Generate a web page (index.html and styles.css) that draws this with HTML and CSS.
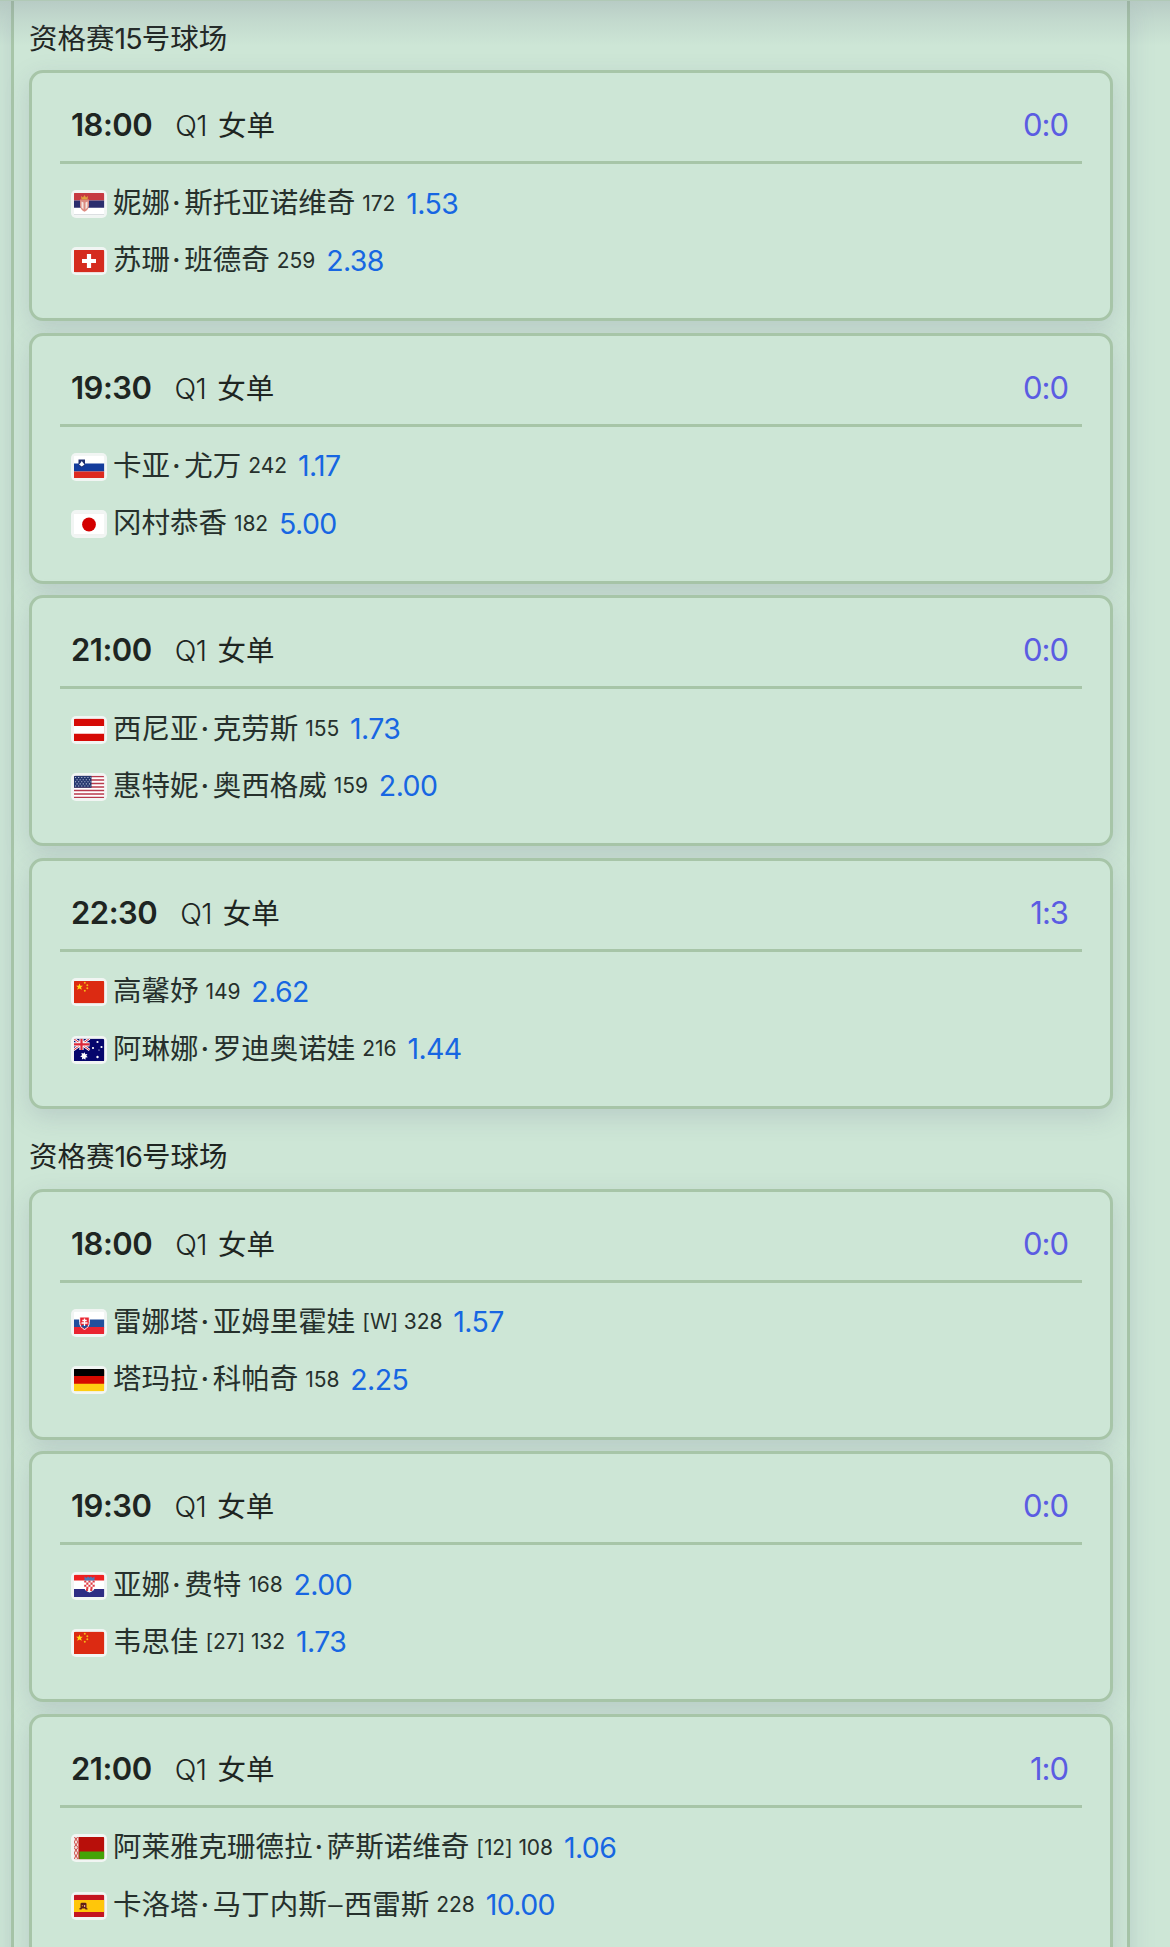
FILE: index.html
```html
<!DOCTYPE html>
<html lang="zh-CN">
<head>
<meta charset="utf-8">
<title>资格赛赛程</title>
<link rel="stylesheet" href="styles.css">
</head>
<body>
<svg class="defs" width="0" height="0" aria-hidden="true">
  <symbol id="rs" viewBox="0 0 31 23"><path fill="#fff" d="M0 0h31v23H0z"/><path fill="#c73a42" d="M0 0h31v8H0z"/><path fill="#2b2d6e" d="M0 8h31v7.300H0z"/><path fill="#dcdfe2" d="M0 21.500h31v1H0z"/><path fill="#dc8a80" d="M6.500 7h9v6c0 3-2 5-4.500 6.200C8.500 18 6.500 16 6.500 13z"/><path fill="#f3e4df" d="M8 9l2 1v7l-2-2zm6 0l-2 1v7l2-2z"/><path fill="#e0a040" d="M7.500 3.500l2 1.500L11 2.500 12.500 5l2-1.500L14 7H8z"/></symbol>
  <symbol id="ch" viewBox="0 0 31 23"><path fill="#d52b1e" d="M0 0h31v23H0z"/><path fill="#fff" d="M13.400 4.500h4.200v4.900h4.900v4.200h-4.900v4.900h-4.200v-4.900H8.500V9.400h4.900z"/></symbol>
  <symbol id="si" viewBox="0 0 31 23"><path fill="#fff" d="M0 0h31v23H0z"/><path fill="#143c9c" d="M0 8h31v8H0z"/><path fill="#dd2a20" d="M0 16h31v7H0z"/><path fill="#1f2f70" d="M5 4h6.500v4c0 2-1.500 3-3.250 4C6.500 11 5 10 5 8z"/><path fill="#fff" d="M5.500 9l1.500-1.500L8.250 5.500 9.700 7.500 11 9 8.250 11z"/></symbol>
  <symbol id="jp" viewBox="0 0 31 23"><path fill="#fff" d="M0 0h31v23H0z"/><path fill="#e3e5e4" d="M0 0h31v1H0zM0 22h31v1H0z"/><circle cx="15.500" cy="12" r="6.900" fill="#d30000"/></symbol>
  <symbol id="at" viewBox="0 0 31 23"><path fill="#d60a06" d="M0 0h31v23H0z"/><path fill="#fff" d="M0 7.500h31v7.800H0z"/></symbol>
  <symbol id="us" viewBox="0 0 31 23"><path fill="#fff" d="M0 0h31v23H0z"/><path stroke="#b83a4c" stroke-width="1.500" d="M0 1h31M0 4.500h31M0 8h31M0 11.500h31M0 15h31M0 18.500h31M0 22h31"/><path fill="#26386f" d="M0 0h18v12.300H0z"/><path stroke="#b7bfd6" stroke-width="1.100" stroke-dasharray="1.100 2" d="M1.500 2h16M3 4.200h14M1.500 6.300h16M3 8.400h14M1.500 10.500h16"/></symbol>
  <symbol id="cn" viewBox="0 0 31 23"><path fill="#dc2a12" d="M0 0h31v23H0z"/><path fill="#ffda16" d="M6 3l.9 2.200h2.500L7.500 6.800l.8 2.500L6 7.900 3.700 9.300l.8-2.500-1.900-1.600h2.500z"/><g fill="#f5b817"><circle cx="11.300" cy="2.300" r="1"/><circle cx="13.800" cy="4.700" r="1"/><circle cx="13.800" cy="7.800" r="1"/><circle cx="11.300" cy="10.200" r="1"/></g></symbol>
  <symbol id="au" viewBox="0 0 31 23"><path fill="#06066c" d="M0 0h31v23H0z"/><path stroke="#fff" stroke-width="2.600" d="M0 0l16 11.500M16 0L0 11.500"/><path stroke="#dc2638" stroke-width="1" d="M0 0l16 11.500M16 0L0 11.500"/><path stroke="#fff" stroke-width="4.200" d="M8 0v11.500M0 5.800h16"/><path stroke="#dc2638" stroke-width="2.200" d="M8 0v11.500M0 5.800h16"/><path fill="#fff" d="M11 13.700l.8 2 2.100-.3-1.100 1.800 1.500 1.500-2.200.4-.2 2.100-1.700-1.300-1.800 1 .3-2.100-2-.9 1.800-1.200-.6-2.100 2.200.5z"/><g fill="#fff"><circle cx="24" cy="3.500" r="1.100"/><circle cx="19.500" cy="9.500" r="1.100"/><circle cx="28" cy="8.500" r="1.100"/><circle cx="25.500" cy="11.500" r=".6"/><circle cx="24" cy="18.500" r="1.200"/></g></symbol>
  <symbol id="sk" viewBox="0 0 31 23"><path fill="#fff" d="M0 0h31v23H0z"/><path fill="#204f9c" d="M0 8h31v8H0z"/><path fill="#e92430" d="M0 15.500h31V23H0z"/><path fill="#e92430" stroke="#fff" d="M6.200 5.500h9.600v5.500c0 3.500-2 5.500-4.800 7-2.800-1.500-4.800-3.500-4.800-7z"/><path fill="#204f9c" d="M7.500 14.500q3.500-2.500 7 0L11 17.300z"/><path stroke="#fff" stroke-width="1.300" d="M11 7v7.500M8.800 9h4.400M8 11.500h6"/></symbol>
  <symbol id="de" viewBox="0 0 31 23"><path fill="#ffce12" d="M0 0h31v23H0z"/><path fill="#d60a00" d="M0 0h31v15.200H0z"/><path d="M0 0h31v7.500H0z"/></symbol>
  <symbol id="hr" viewBox="0 0 31 23"><path fill="#fff" d="M0 0h31v23H0z"/><path fill="#ee2020" d="M0 0h31v6H0z"/><path fill="#2e2c84" d="M0 14.500h31V23H0z"/><path fill="#fff" d="M10.500 6h11v6c0 3-2 5-5.500 6-3.500-1-5.500-3-5.500-6z"/><path stroke="#e03a44" stroke-width="2.100" stroke-dasharray="2.100 2.100" d="M10.700 7h10.500M12.800 9.100h8.500M10.700 11.200h10.500M12.800 13.300h7.500M12.500 15.400h7"/><path fill="#4e78b8" d="M11 2l2 1.500L14.500 2 16 3.200 17.500 2 19 3.500 21 2v4H11z"/></symbol>
  <symbol id="by" viewBox="0 0 31 23"><path fill="#b80f0a" d="M0 0h31v23H0z"/><path fill="#44a306" d="M6 15h25v8H6z"/><path fill="#f2dcd9" d="M0 0h5v23H0z"/><path fill="none" stroke="#c9403b" stroke-width=".9" d="M.5 0L4.500 5.500.5 11l4 5.500-4 6M4.500 0L.5 5.500l4 5.500-4 5.500 4 6"/></symbol>
  <symbol id="es" viewBox="0 0 31 23"><path fill="#c41420" d="M0 0h31v23H0z"/><path fill="#ffc60a" d="M0 5.500h31v12H0z"/><path fill="#5e2018" d="M7 9l1-.8h4l1 .8v4.500l1 .5v1h-2l-.5-1h-3l-.5 1H6v-1.500h1z"/><path fill="#c8832b" d="M8.300 10.500h1.400v1.300H8.300z"/><path fill="#e1a3a0" d="M10.500 10.500h1.200v2h-1.200z"/></symbol>
</svg>

<main class="schedule">
  <section class="court">
    <h2 class="court-name">资格赛<span class="num">15</span>号球场</h2>
    <article class="match">
      <header class="match-head"><time class="time">18:00</time><span class="round"><span class="num">Q1</span> 女单</span><span class="score">0:0</span></header>
      <div class="players">
        <div class="player"><svg class="flag"><use href="#rs"/></svg><span class="name">妮娜<i class="dot">·</i>斯托亚诺维奇</span><span class="rank">172</span><span class="odds">1.53</span></div>
        <div class="player"><svg class="flag"><use href="#ch"/></svg><span class="name">苏珊<i class="dot">·</i>班德奇</span><span class="rank">259</span><span class="odds">2.38</span></div>
      </div>
    </article>
    <article class="match">
      <header class="match-head"><time class="time">19:30</time><span class="round"><span class="num">Q1</span> 女单</span><span class="score">0:0</span></header>
      <div class="players">
        <div class="player"><svg class="flag"><use href="#si"/></svg><span class="name">卡亚<i class="dot">·</i>尤万</span><span class="rank">242</span><span class="odds">1.17</span></div>
        <div class="player"><svg class="flag"><use href="#jp"/></svg><span class="name">冈村恭香</span><span class="rank">182</span><span class="odds">5.00</span></div>
      </div>
    </article>
    <article class="match">
      <header class="match-head"><time class="time">21:00</time><span class="round"><span class="num">Q1</span> 女单</span><span class="score">0:0</span></header>
      <div class="players">
        <div class="player"><svg class="flag"><use href="#at"/></svg><span class="name">西尼亚<i class="dot">·</i>克劳斯</span><span class="rank">155</span><span class="odds">1.73</span></div>
        <div class="player"><svg class="flag"><use href="#us"/></svg><span class="name">惠特妮<i class="dot">·</i>奥西格威</span><span class="rank">159</span><span class="odds">2.00</span></div>
      </div>
    </article>
    <article class="match">
      <header class="match-head"><time class="time">22:30</time><span class="round"><span class="num">Q1</span> 女单</span><span class="score">1:3</span></header>
      <div class="players">
        <div class="player"><svg class="flag"><use href="#cn"/></svg><span class="name">高馨妤</span><span class="rank">149</span><span class="odds">2.62</span></div>
        <div class="player"><svg class="flag"><use href="#au"/></svg><span class="name">阿琳娜<i class="dot">·</i>罗迪奥诺娃</span><span class="rank">216</span><span class="odds">1.44</span></div>
      </div>
    </article>
  </section>

  <section class="court">
    <h2 class="court-name">资格赛<span class="num">16</span>号球场</h2>
    <article class="match">
      <header class="match-head"><time class="time">18:00</time><span class="round"><span class="num">Q1</span> 女单</span><span class="score">0:0</span></header>
      <div class="players">
        <div class="player"><svg class="flag"><use href="#sk"/></svg><span class="name">雷娜塔<i class="dot">·</i>亚姆里霍娃</span><span class="rank">[W] 328</span><span class="odds">1.57</span></div>
        <div class="player"><svg class="flag"><use href="#de"/></svg><span class="name">塔玛拉<i class="dot">·</i>科帕奇</span><span class="rank">158</span><span class="odds">2.25</span></div>
      </div>
    </article>
    <article class="match">
      <header class="match-head"><time class="time">19:30</time><span class="round"><span class="num">Q1</span> 女单</span><span class="score">0:0</span></header>
      <div class="players">
        <div class="player"><svg class="flag"><use href="#hr"/></svg><span class="name">亚娜<i class="dot">·</i>费特</span><span class="rank">168</span><span class="odds">2.00</span></div>
        <div class="player"><svg class="flag"><use href="#cn"/></svg><span class="name">韦思佳</span><span class="rank">[27] 132</span><span class="odds">1.73</span></div>
      </div>
    </article>
    <article class="match">
      <header class="match-head"><time class="time">21:00</time><span class="round"><span class="num">Q1</span> 女单</span><span class="score">1:0</span></header>
      <div class="players">
        <div class="player"><svg class="flag"><use href="#by"/></svg><span class="name">阿莱雅克珊德拉<i class="dot">·</i>萨斯诺维奇</span><span class="rank">[12] 108</span><span class="odds">1.06</span></div>
        <div class="player"><svg class="flag"><use href="#es"/></svg><span class="name">卡洛塔<i class="dot">·</i>马丁内斯<i class="dash">–</i>西雷斯</span><span class="rank">228</span><span class="odds">10.00</span></div>
      </div>
    </article>
  </section>
</main>
<div class="top-shade"></div>
</body>
</html>
```
FILE: styles.css
```css
* { box-sizing: border-box; }

html { height: 1947px; overflow: hidden; }

body {
  margin: 0;
  height: 1947px;
  overflow: hidden;
  background: #cde6d6;
  color: #1e2522;
  font-family: Inter, "Noto Sans CJK SC", sans-serif;
  font-size: 28.5px;
}

.defs { position: absolute; }

.schedule {
  width: 1119px;
  height: 2100px;
  margin-left: 11px;
  padding: 0 14px 0 15px;
  border: 3px solid #a7c5a8;
  border-top: 0;
  box-shadow: 0 8px 24px rgba(120, 125, 160, .2);
}

.court-name {
  height: 70px;
  margin: 0;
  padding-top: 16px;
  font-family: "Noto Sans CJK SC", sans-serif;
  font-size: 28.5px;
  font-weight: 400;
  line-height: 42px;
}

.court + .court .court-name { height: 79.600px; padding-top: 25px; }

.num { font-family: Inter, sans-serif; font-weight: 400; letter-spacing: -.9px; }
.round .num { margin-right: 3px; font-weight: 300; letter-spacing: -.6px; }

.match {
  height: 251px;
  margin-bottom: 11.700px;
  padding: 0 28px;
  background: #cde6d6;
  border: 3px solid #a7c5a8;
  border-radius: 14px;
  box-shadow: 0 8px 24px rgba(120, 125, 150, .24);
}
.court .match:last-child { margin-bottom: 0; }

.match-head {
  display: flex;
  align-items: baseline;
  height: 91px;
  padding: 31px 14px 0 11px;
  border-bottom: 3px solid #a7c5a8;
  line-height: 42px;
}

.time { font-size: 31px; font-weight: 600; letter-spacing: -.5px; }

.round { margin-left: 23px; }

.score { margin-left: auto; color: #5b5ce2; font-size: 31px; letter-spacing: -1px; }

.players { padding-top: 10.700px; }

.player {
  display: flex;
  align-items: center;
  height: 57.200px;
  padding-left: 11px;
  color: #26302c;
  line-height: 42px;
}

.flag {
  flex: none;
  width: 36px;
  height: 28px;
  margin: 2px 6px 0 0;
  padding: 2.500px;
  border-radius: 5px;
  background: #f1f5f3;
}

.name { white-space: nowrap; }

.dot, .dash { display: inline-block; width: 14.300px; font-style: normal; text-align: center; }
.dot { padding-right: 1.500px; font-weight: 500; }
.dash { width: 17px; font-weight: 300; }

.rank { margin: 1px 0 0 7px; font-size: 21px; letter-spacing: -.1px; white-space: nowrap; }

.odds { margin: 1px 0 0 11px; color: #1766e2; letter-spacing: -.6px; }

.top-shade {
  position: absolute;
  inset: 0 0 auto 0;
  height: 46px;
  border-top: 1px solid #b0c9b6;
  background: linear-gradient(rgba(120, 125, 145, .25), rgba(120, 125, 145, .13) 40%, rgba(120, 125, 145, 0));
}
```
